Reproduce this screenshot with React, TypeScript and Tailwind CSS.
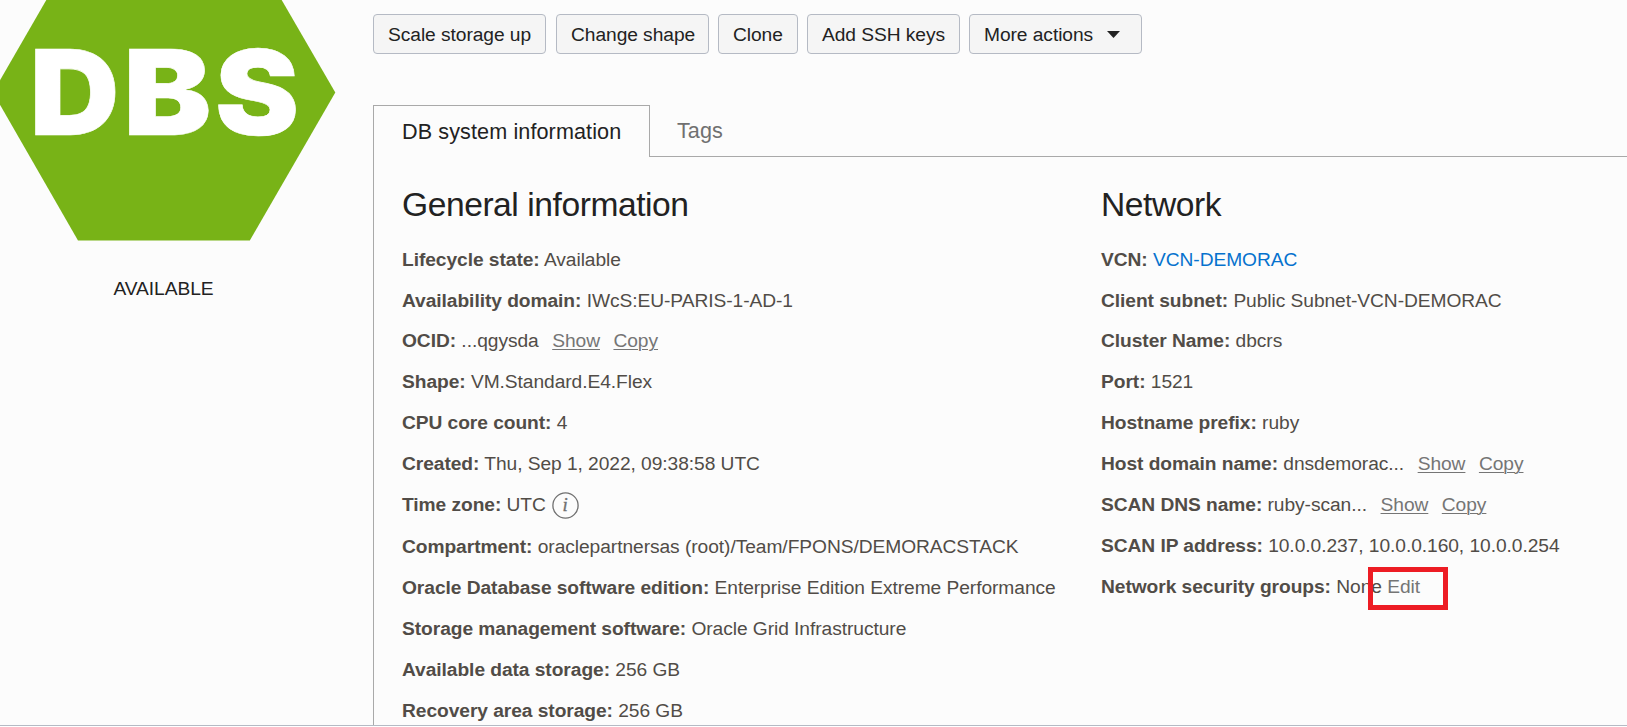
import type { ReactNode } from "react";

function Hexagon() {
  return (
    <svg width="336" height="241" viewBox="0 0 336 241" className="block" role="img" aria-label="DBS">
      <polygon points="-7,92.5 78,-55 249.8,-55 335.3,92.5 249.8,240.5 78,240.5" fill="#78b317" />
      <g fill="#fff" stroke="#fff" strokeWidth="0.6" fontFamily="Inter, 'Liberation Sans', sans-serif" fontWeight="900" fontSize="118">
        <text x="29.8" y="135" textLength="89.5" lengthAdjust="spacingAndGlyphs">D</text>
        <text x="123.3" y="135" textLength="88" lengthAdjust="spacingAndGlyphs">B</text>
        <text x="215" y="135" textLength="84" lengthAdjust="spacingAndGlyphs">S</text>
      </g>
    </svg>
  );
}

function Button({ width, children }: { width: string; children: ReactNode }) {
  return (
    <button
      className={`flex h-10 items-center rounded-[4px] border border-[#b5bac4] bg-[#f5f5f5] pt-[2px] pl-3.5 text-[19.2px] tracking-[-0.06px] whitespace-nowrap text-[#222] ${width}`}
    >
      {children}
    </button>
  );
}

function Row({ label, tall, children }: { label: string; tall?: boolean; children: ReactNode }) {
  return (
    <div className={`leading-[40.8px] whitespace-nowrap ${tall ? "h-[42.68px]" : "h-[40.87px]"}`}>
      <span className="font-bold">{label}:</span> {children}
    </div>
  );
}

function ShowCopy() {
  return (
    <span className="ml-[13.5px] inline-flex gap-[13.5px] text-[#757575]">
      <a className="underline decoration-1 underline-offset-2">Show</a>
      <a className="underline decoration-1 underline-offset-2">Copy</a>
    </span>
  );
}

function InfoIcon() {
  return (
    <svg width="27" height="27" viewBox="0 0 27 27" className="ml-[1px] inline-block align-[-8px]">
      <circle cx="13.5" cy="13.5" r="12.6" fill="none" stroke="#707070" strokeWidth="1.3" />
      <text x="10.6" y="18.8" fontFamily="'Liberation Serif', serif" fontStyle="italic" fontSize="19" fill="#707070" stroke="#707070" strokeWidth="0.35">i</text>
    </svg>
  );
}

export default function App() {
  return (
    <div className="h-[727px] w-full overflow-hidden bg-white font-['Liberation_Sans',Arial,sans-serif] text-[19.2px] tracking-[-0.06px] text-[#514c47]">
      <div className="flex h-[726px] overflow-hidden border-b border-[#b5bac4] bg-[#fcfcfc]">
        <aside className="w-[373px] shrink-0">
          <Hexagon />
          <div className="mt-9 w-[327px] text-center leading-6 text-[#222]">AVAILABLE</div>
        </aside>
        <main className="flex min-w-0 flex-1 flex-col pt-3.5">
          <div className="flex">
            <Button width="w-[173px] mr-[10px]">Scale storage up</Button>
            <Button width="w-[153px] mr-[9px]">Change shape</Button>
            <Button width="w-[80px] mr-[9px]">Clone</Button>
            <Button width="w-[153px] mr-[9px]">Add SSH keys</Button>
            <Button width="w-[173px]">
              More actions
              <svg width="13" height="7" viewBox="0 0 13 7" className="mb-[2px] ml-3.5">
                <path d="M0 0H13L6.5 7Z" fill="#222" />
              </svg>
            </Button>
          </div>
          <div className="mt-[51px] flex h-[52px] shrink-0 text-[21.6px] tracking-[0.04px]">
            <div className="w-[277px] border-t border-r border-l border-[#a9a9a9] pt-[13px] pl-7 leading-[26px] tracking-[0.1px] text-[#222]">
              DB system information
            </div>
            <div className="flex-1 border-b border-[#a9a9a9] pt-[13px] pl-[27px] leading-[26px] text-[#707070]">Tags</div>
          </div>
          <div className="flex flex-1 border-l border-[#a9a9a9] pl-7">
            <section className="w-[699px] shrink-0">
              <h2 className="h-[82.65px] pt-7 text-[33.6px] leading-10 tracking-[-0.44px] text-[#222]">General information</h2>
              <Row label="Lifecycle state">Available</Row>
              <Row label="Availability domain">IWcS:EU-PARIS-1-AD-1</Row>
              <Row label="OCID">...qgysda<ShowCopy /></Row>
              <Row label="Shape">VM.Standard.E4.Flex</Row>
              <Row label="CPU core count">4</Row>
              <Row label="Created">Thu, Sep 1, 2022, 09:38:58 UTC</Row>
              <Row label="Time zone" tall>UTC <InfoIcon /></Row>
              <Row label="Compartment">oraclepartnersas (root)/Team/FPONS/DEMORACSTACK</Row>
              <Row label="Oracle Database software edition">Enterprise Edition Extreme Performance</Row>
              <Row label="Storage management software">Oracle Grid Infrastructure</Row>
              <Row label="Available data storage">256 GB</Row>
              <Row label="Recovery area storage">256 GB</Row>
            </section>
            <section>
              <h2 className="h-[82.65px] pt-7 text-[33.6px] leading-10 tracking-[-0.44px] text-[#222]">Network</h2>
              <Row label="VCN"><a className="text-[#0572ce]">VCN-DEMORAC</a></Row>
              <Row label="Client subnet">Public Subnet-VCN-DEMORAC</Row>
              <Row label="Cluster Name">dbcrs</Row>
              <Row label="Port">1521</Row>
              <Row label="Hostname prefix">ruby</Row>
              <Row label="Host domain name">dnsdemorac...<ShowCopy /></Row>
              <Row label="SCAN DNS name">ruby-scan...<ShowCopy /></Row>
              <Row label="SCAN IP address">10.0.0.237, 10.0.0.160, 10.0.0.254</Row>
              <Row label="Network security groups">
                None{" "}
                <span className="relative text-[#757575]">
                  Edit
                  <span className="absolute -top-[9px] -left-[19px] h-[43px] w-20 border-[5px] border-[#ed1c24]" />
                </span>
              </Row>
            </section>
          </div>
        </main>
      </div>
    </div>
  );
}
